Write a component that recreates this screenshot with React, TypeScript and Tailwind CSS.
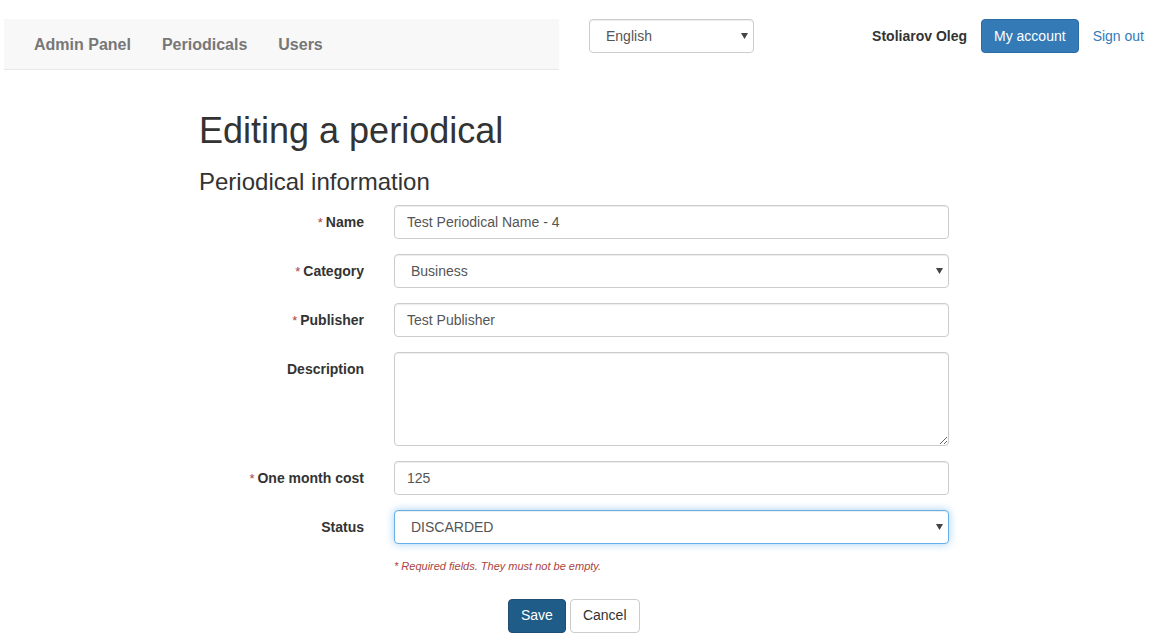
import { ReactNode } from "react";

const font = { fontFamily: '"Liberation Sans", Arial, Helvetica, sans-serif' };

const Caret = () => (
  <svg
    className="pointer-events-none absolute right-[6px] top-1/2 -translate-y-1/2 h-[6px] w-[7px] text-[#444]"
    viewBox="0 0 7 6"
  >
    <path d="M0 0h7L3.5 6z" fill="currentColor" />
  </svg>
);

const Label = ({ text, required }: { text: string; required?: boolean }) => (
  <label className="w-[165px] shrink-0 pt-[7px] text-right text-[14px] font-bold leading-[20px] text-[#333]">
    {required && (
      <span className="mr-[3px] text-[13px] font-normal text-[#a94442]">*</span>
    )}
    {text}
  </label>
);

const Row = ({ children }: { children: ReactNode }) => (
  <div className="flex items-start gap-[30px]">{children}</div>
);

const inputCls =
  "h-[34px] w-[555px] rounded-[4px] border border-[#ccc] bg-white px-[12px] text-[14px] text-[#555] shadow-[inset_0_1px_1px_rgba(0,0,0,0.075)] outline-none";

const Select = ({ value, focused }: { value: string; focused?: boolean }) => (
  <div className="relative">
    <div
      className={`flex h-[34px] w-[555px] items-center rounded-[4px] border bg-white pl-[16px] text-[14px] text-[#555] ${
        focused
          ? "border-[#66afe9] shadow-[inset_0_1px_1px_rgba(0,0,0,0.075),0_0_8px_rgba(102,175,233,0.6)]"
          : "border-[#ccc] shadow-[inset_0_1px_1px_rgba(0,0,0,0.075)]"
      }`}
    >
      {value}
    </div>
    <Caret />
  </div>
);

export default function App() {
  return (
    <div className="min-h-screen bg-white text-[14px] text-[#333]" style={font}>
      {/* Header */}
      <div className="flex items-start pt-[19px]">
        <nav className="ml-[4px] flex h-[51px] w-[555px] items-center gap-[31px] border-b border-[#e7e7e7] bg-[#f8f8f8] pl-[30px] pt-[2px] text-[16px] font-bold text-[#777]">
          <span>Admin Panel</span>
          <span>Periodicals</span>
          <span>Users</span>
        </nav>

        <div className="relative ml-[30px]">
          <div className="flex h-[34px] w-[165px] items-center rounded-[4px] border border-[#ccc] bg-white pl-[16px] text-[14px] text-[#555] shadow-[inset_0_1px_1px_rgba(0,0,0,0.075)]">
            English
          </div>
          <Caret />
        </div>

        <div className="ml-auto flex h-[34px] items-center pr-[22px]">
          <span className="font-bold text-[#333]">Stoliarov Oleg</span>
          <button className="ml-[14px] h-[34px] rounded-[4px] border border-[#2e6da4] bg-[#337ab7] px-[12px] text-[14px] text-white">
            My account
          </button>
          <a className="ml-[14px] text-[#337ab7]">Sign out</a>
        </div>
      </div>

      {/* Content */}
      <div className="ml-[199px] w-[750px]">
        <h1 className="mt-[41px] text-[36px] leading-[40px] text-[#333]">
          Editing a periodical
        </h1>
        <h3 className="mt-[18px] text-[24px] leading-[26px] text-[#333]">
          Periodical information
        </h3>

        <form className="mt-[10px] flex flex-col gap-[15px]">
          <Row>
            <Label text="Name" required />
            <input className={inputCls} defaultValue="Test Periodical Name - 4" />
          </Row>
          <Row>
            <Label text="Category" required />
            <Select value="Business" />
          </Row>
          <Row>
            <Label text="Publisher" required />
            <input className={inputCls} defaultValue="Test Publisher" />
          </Row>
          <Row>
            <Label text="Description" />
            <textarea className="h-[94px] w-[555px] rounded-[4px] border border-[#ccc] bg-white px-[12px] py-[6px] text-[14px] text-[#555] shadow-[inset_0_1px_1px_rgba(0,0,0,0.075)] outline-none" />
          </Row>
          <Row>
            <Label text="One month cost" required />
            <input className={inputCls} defaultValue="125" />
          </Row>
          <Row>
            <Label text="Status" />
            <Select value="DISCARDED" focused />
          </Row>
        </form>

        <p className="ml-[195px] mt-[14px] text-[11px] italic text-[#a94442]">
          * Required fields. They must not be empty.
        </p>

        <div className="mt-[24px] flex gap-[4px] pl-[309px]">
          <button className="h-[34px] rounded-[4px] border border-[#204d74] bg-[#1f5c87] px-[12px] text-[14px] text-white">
            Save
          </button>
          <button className="h-[34px] rounded-[4px] border border-[#ccc] bg-white px-[12px] text-[14px] text-[#333]">
            Cancel
          </button>
        </div>
      </div>
    </div>
  );
}
